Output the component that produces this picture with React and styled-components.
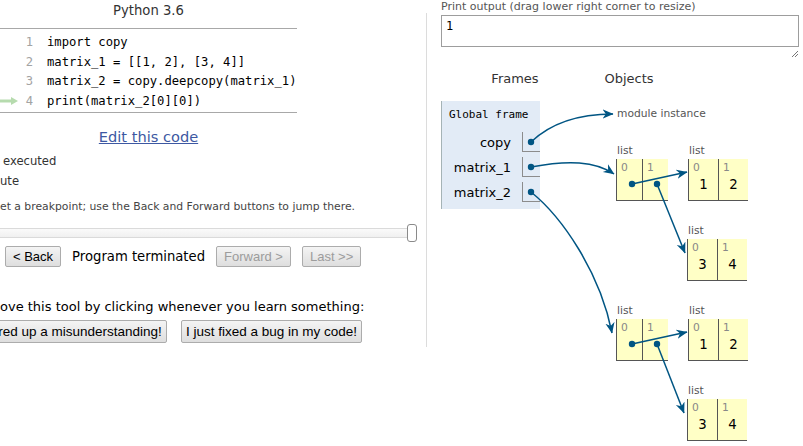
import React from 'react';
import styled, { createGlobalStyle } from 'styled-components';

const GlobalStyle = createGlobalStyle`
  html, body {
    margin: 0;
    padding: 0;
    background: #fff;
  }
  body {
    font-family: "DejaVu Sans", Verdana, sans-serif;
    color: #000;
  }
`;

const Root = styled.div`
  position: relative;
  width: 803px;
  height: 446px;
  overflow: hidden;
  display: flex;
  align-items: flex-start;
`;

// Left side: code + controls
const LeftCol = styled.div`
  width: 426px;
  flex-shrink: 0;
  overflow: hidden;
  display: flex;
  flex-direction: column;
`;

const Divider = styled.div`
  width: 1px;
  height: 334px;
  margin-top: 13px;
  background: #dcdcdc;
  flex-shrink: 0;
`;

const CodePane = styled.div`
  width: 297px;
`;

const LangTitle = styled.div`
  height: 28px;
  line-height: 22px;
  text-align: center;
  font-size: 13.2px;
  color: #333;
`;

const CodeBox = styled.div`
  border-top: 1px solid #a8a8a8;
  border-bottom: 1px solid #a8a8a8;
  padding: 3px 0 1px;
`;

const CodeLine = styled.div`
  display: flex;
  align-items: center;
  height: 19.7px;
  font-family: "DejaVu Sans Mono", monospace;
  font-size: 12.2px;
  white-space: pre;
`;

const Gutter = styled.div`
  width: 20px;
  height: 12px;
  display: flex;
  align-items: center;
`;

const LineNo = styled.span`
  width: 13px;
  text-align: right;
  color: #a3a3a3;
`;

const CodeText = styled.span`
  padding-left: 14px;
`;

const EditLink = styled.a`
  display: block;
  margin-top: 14px;
  line-height: 20px;
  text-align: center;
  font-size: 14.6px;
  color: #3d58a2;
  text-decoration: underline;
`;

const Legend = styled.div`
  margin-top: 4px;
`;

const LegendLine = styled.div`
  line-height: 20px;
  font-size: 11.6px;
  color: #333;
  padding-left: ${p => p.$indent || 0}px;
`;

const Hint = styled.div`
  margin-top: 8px;
  line-height: 16px;
  font-size: 10.8px;
  color: #444;
  white-space: nowrap;
`;

const Slider = styled.div`
  position: relative;
  margin-top: 9px;
  height: 18px;
  display: flex;
  align-items: center;
`;

const SliderTrack = styled.div`
  margin-left: -6px;
  width: 418px;
  height: 10px;
  box-sizing: border-box;
  border: 1px solid #dadada;
  border-radius: 4px;
  background: linear-gradient(#fafafa, #f0f0f0);
`;

const SliderHandle = styled.div`
  position: absolute;
  left: 407px;
  top: 0;
  width: 10px;
  height: 18px;
  box-sizing: border-box;
  border: 1px solid #8a8a8a;
  border-radius: 3px;
  background: #fff;
`;

const NavRow = styled.div`
  margin-top: 4px;
  display: flex;
  align-items: center;
  gap: 11px;
  padding-left: 5px;
`;

const Button = styled.button`
  height: ${p => p.$tall ? 23 : 21}px;
  padding: 0 ${p => p.$tall ? 4 : 7}px;
  margin: 0;
  flex-shrink: 0;
  font-family: "Liberation Sans", Arial, sans-serif;
  font-size: ${p => p.$tall ? 13.5 : 13}px;
  color: ${p => p.disabled ? '#9c9c9c' : '#000'};
  background: linear-gradient(#f4f4f4, #dedede);
  border: 1px solid #acacac;
  border-radius: 2px;
  white-space: nowrap;
`;

const Status = styled.span`
  font-size: 13.2px;
  white-space: nowrap;
`;

const HelpText = styled.div`
  margin-top: 31px;
  line-height: 18px;
  font-size: 13px;
  white-space: nowrap;
`;

const FeedbackRow = styled.div`
  margin-top: 4px;
  display: flex;
  gap: 14px;
`;

const Bleed = styled.div`
  margin-left: -${p => p.$cut}px;
`;

// Right side: output + visualisation
const RightCol = styled.div`
  flex: 1;
  padding-left: 14px;
  display: flex;
  flex-direction: column;
`;

const PrintLabel = styled.div`
  line-height: 13px;
  font-size: 11px;
  color: #555;
  white-space: nowrap;
`;

const OutputBox = styled.div`
  position: relative;
  margin-top: 2px;
  width: 358px;
  height: 32px;
  box-sizing: border-box;
  border: 1px solid #9d9d9d;
  padding: 3px 4px;
  font-family: "DejaVu Sans Mono", monospace;
  font-size: 12px;
`;

const Grip = styled.svg`
  position: absolute;
  right: 0;
  top: 35px;
`;

const VizHeader = styled.div`
  margin-top: 24px;
  display: flex;
  line-height: 16px;
  font-size: 13px;
  color: #333;
`;

const ColLabel = styled.div`
  width: ${p => p.$w}px;
  text-align: center;
`;

const FrameBox = styled.div`
  margin-top: 14px;
  width: 99px;
  box-sizing: border-box;
  background: #e2ebf6;
  border-left: 1px solid #a5b3b6;
  padding: 6px 0 4px 7px;
`;

const FrameHeader = styled.div`
  font-family: "DejaVu Sans Mono", monospace;
  font-size: 11px;
  line-height: 16px;
  margin-bottom: 7px;
`;

const VarRow = styled.div`
  display: flex;
  justify-content: flex-end;
  align-items: center;
  height: 24px;
  margin-bottom: 1px;
`;

const VarName = styled.span`
  font-size: 13px;
  padding-right: 11px;
`;

const VarCell = styled.div`
  width: 18px;
  height: 20px;
  box-sizing: border-box;
  border-left: 1px solid #8c8c8c;
  border-bottom: 1px solid #8c8c8c;
`;

const HeapNode = styled.div`
  position: absolute;
  left: ${p => p.$x}px;
  top: ${p => p.$y}px;
`;

const TypeLabel = styled.div`
  line-height: 16px;
  font-size: 10.7px;
  color: #555;
  padding-left: 1px;
  white-space: nowrap;
`;

const ListRow = styled.div`
  display: flex;
`;

const ListCell = styled.div`
  width: ${p => p.$w}px;
  height: 42px;
  box-sizing: border-box;
  background: #ffffc6;
  border-left: 1px solid #555;
  border-bottom: 1px solid #555;
  padding-top: 2px;
`;

const Index = styled.div`
  line-height: 14px;
  font-size: 10.7px;
  color: #888;
  padding-left: 4px;
`;

const Value = styled.div`
  line-height: 20px;
  font-size: 13.3px;
  text-align: center;
`;

const Overlay = styled.svg`
  position: absolute;
  left: 0;
  top: 0;
  pointer-events: none;
`;

const code = [
  'import copy',
  'matrix_1 = [[1, 2], [3, 4]]',
  'matrix_2 = copy.deepcopy(matrix_1)',
  'print(matrix_2[0][0])',
];

const heapLists = [
  { x: 616, y: 143, w: 26, values: ['', ''] },
  { x: 688, y: 143, w: 30, values: ['1', '2'] },
  { x: 687, y: 223, w: 30, values: ['3', '4'] },
  { x: 616, y: 303, w: 26, values: ['', ''] },
  { x: 688, y: 303, w: 30, values: ['1', '2'] },
  { x: 687, y: 383, w: 30, values: ['3', '4'] },
];

const dots = [
  [531, 142], [531, 167], [531, 192],
  [632, 184], [657, 184], [632, 344], [657, 344],
];

const arrows = [
  'M531,142 C552,122 580,114 613,114',
  'M531,167 C568,160 595,161 614,174',
  'M531,192 C562,217 600,272 612,333',
  'M632,184 L687,172',
  'M657,184 L685,253',
  'M632,344 L687,332',
  'M657,344 L684,413',
];

const ArrowLayer = () => (
  <Overlay width="803" height="446">
    <defs>
      <marker id="head" viewBox="0 0 10 10" refX="9.5" refY="5" markerWidth="11" markerHeight="11"
        markerUnits="userSpaceOnUse" orient="auto">
        <path d="M0,0.8 L10,5 L0,9.2 L3,5 z" fill="#005583" />
      </marker>
    </defs>
    {arrows.map((d, i) => (
      <path key={i} d={d} fill="none" stroke="#005583" strokeWidth="1.5" markerEnd="url(#head)" />
    ))}
    {dots.map(([cx, cy], i) => (
      <circle key={i} cx={cx} cy={cy} r="3.2" fill="#005583" />
    ))}
  </Overlay>
);

const HeapList = ({ x, y, w, values }) => (
  <HeapNode $x={x} $y={y}>
    <TypeLabel>list</TypeLabel>
    <ListRow>
      {values.map((v, i) => (
        <ListCell key={i} $w={w}>
          <Index>{i}</Index>
          <Value>{v}</Value>
        </ListCell>
      ))}
    </ListRow>
  </HeapNode>
);

export default function App() {
  return (
    <Root>
      <GlobalStyle />

      <LeftCol>
        <CodePane>
          <LangTitle>Python 3.6</LangTitle>
          <CodeBox>
            {code.map((line, i) => (
              <CodeLine key={i}>
                <Gutter>
                  {i === 3 && (
                    <svg width="19" height="10" viewBox="0 0 19 10">
                      <path d="M0,5 L13,5" stroke="#b6dbae" strokeWidth="3" />
                      <path d="M11,1 L18,5 L11,9 z" fill="#b6dbae" />
                    </svg>
                  )}
                </Gutter>
                <LineNo>{i + 1}</LineNo>
                <CodeText>{line}</CodeText>
              </CodeLine>
            ))}
          </CodeBox>
          <EditLink href="#">Edit this code</EditLink>
        </CodePane>

        <Legend>
          <LegendLine $indent={3}>executed</LegendLine>
          <LegendLine>ute</LegendLine>
        </Legend>

        <Hint>et a breakpoint; use the Back and Forward buttons to jump there.</Hint>

        <Slider>
          <SliderTrack />
          <SliderHandle />
        </Slider>

        <NavRow>
          <Button>&lt; Back</Button>
          <Status>Program terminated</Status>
          <Button disabled>Forward &gt;</Button>
          <Button disabled>Last &gt;&gt;</Button>
        </NavRow>

        <HelpText>ove this tool by clicking whenever you learn something:</HelpText>
        <FeedbackRow>
          <Bleed $cut={39}>
            <Button $tall>I cleared up a misunderstanding!</Button>
          </Bleed>
          <Button $tall>I just fixed a bug in my code!</Button>
        </FeedbackRow>
      </LeftCol>

      <Divider />

      <RightCol>
        <PrintLabel>Print output (drag lower right corner to resize)</PrintLabel>
        <OutputBox>
          1
          <Grip width="6" height="6" viewBox="0 0 6 6">
            <path d="M0,6 L6,0 M3,6 L6,3" stroke="#777" strokeWidth="1" />
          </Grip>
        </OutputBox>

        <VizHeader>
          <ColLabel $w={148}>Frames</ColLabel>
          <ColLabel $w={80}>Objects</ColLabel>
        </VizHeader>

        <FrameBox>
          <FrameHeader>Global frame</FrameHeader>
          {['copy', 'matrix_1', 'matrix_2'].map(name => (
            <VarRow key={name}>
              <VarName>{name}</VarName>
              <VarCell />
            </VarRow>
          ))}
        </FrameBox>
      </RightCol>

      <HeapNode $x={616} $y={106}>
        <TypeLabel>module instance</TypeLabel>
      </HeapNode>
      {heapLists.map((l, i) => (
        <HeapList key={i} {...l} />
      ))}

      <ArrowLayer />
    </Root>
  );
}
